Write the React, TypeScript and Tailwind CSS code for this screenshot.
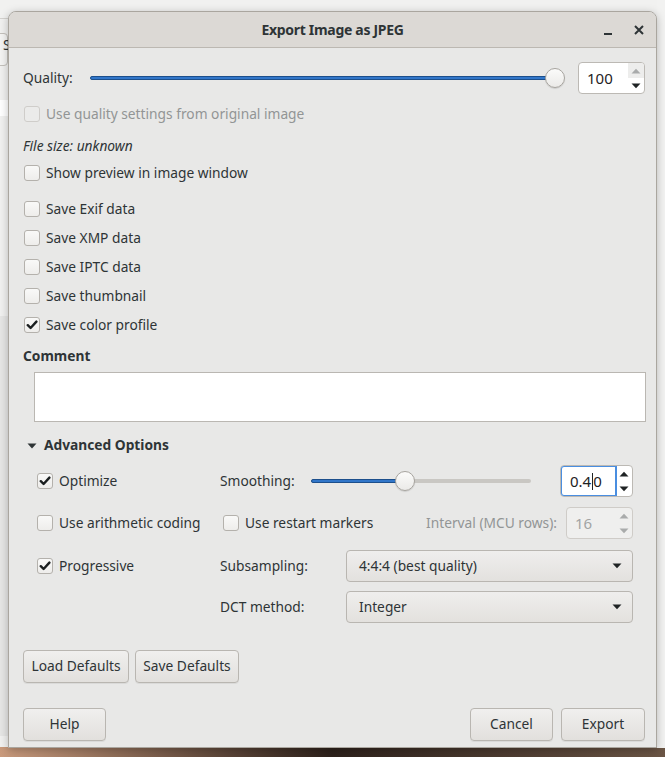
import React from "react";

const TEXT = "text-[#2e3436]";

const Check: React.FC<{ checked?: boolean; disabled?: boolean }> = ({ checked, disabled }) => (
  <span
    className={`flex h-[16px] w-[16px] shrink-0 items-center justify-center rounded-[3px] border ${
      disabled ? "border-[#cfcdca] bg-[#ebebea]" : "border-[#b4b1ac] bg-gradient-to-b from-[#f9f9f8] to-[#eeedeb]"
    }`}
  >
    {checked && (
      <svg width="12" height="12" viewBox="0 0 12 12">
        <path d="M1.8 6.2 L4.6 9 L10.4 2.6" fill="none" stroke="#1b1f20" strokeWidth="2.4" strokeLinecap="round" strokeLinejoin="round" />
      </svg>
    )}
  </span>
);

const CheckRow: React.FC<{ label: string; checked?: boolean; disabled?: boolean; h: string }> = ({ label, checked, disabled, h }) => (
  <div className={`flex items-center gap-[6px] pl-[1px] ${h}`}>
    <Check checked={checked} disabled={disabled} />
    <span className={`pt-[1px] ${disabled ? "text-[#929595]" : TEXT}`}>{label}</span>
  </div>
);

const Slider: React.FC<{ pct: number; className?: string }> = ({ pct, className }) => (
  <div className={`relative h-[20px] ${className ?? ""}`}>
    <div className="absolute left-0 right-[10px] top-[8px] h-[4px] rounded-full bg-[#c9c7c3]" />
    <div
      className="absolute left-0 top-[8px] h-[4px] rounded-full border border-[#1c4f8c] bg-[#3176c9]"
      style={{ width: `calc((100% - 20px) * ${pct} + 10px)` }}
    />
    <div
      className="absolute top-0 h-[20px] w-[20px] rounded-full border border-[#a7a49f] bg-gradient-to-b from-[#fbfbfa] to-[#ebeae8] shadow-[0_1px_1px_rgba(0,0,0,0.12)]"
      style={{ left: `calc((100% - 20px) * ${pct})` }}
    />
  </div>
);

const Arrow: React.FC<{ up?: boolean; color: string }> = ({ up, color }) => (
  <svg width="10" height="6" viewBox="0 0 10 6">
    <path d={up ? "M0.5 5.5 L5 0.8 L9.5 5.5 Z" : "M0.5 0.5 L5 5.2 L9.5 0.5 Z"} fill={color} />
  </svg>
);

const Spin: React.FC<{ value: string; w: string; focused?: boolean; disabled?: boolean; upDisabled?: boolean }> = ({
  value,
  w,
  focused,
  disabled,
  upDisabled,
}) => (
  <div
    className={`flex h-[32px] ${w} overflow-hidden rounded-[4px] border ${
      disabled ? "border-[#cfccc8] bg-[#efefee]" : "border-[#bcb9b4] bg-white"
    }`}
  >
    <div
      className={`flex flex-1 items-center pl-[8px] text-[15px] ${
        focused ? "-m-[1px] rounded-l-[4px] border-2 border-[#4a8ee0] pl-[8px]" : ""
      } ${disabled ? "text-[#a2a4a4]" : "text-[#1f2324]"}`}
    >
      {focused ? (
        <>
          0.4<span className="mx-[0.5px] inline-block h-[17px] w-[1px] bg-[#1f2324]" />0
        </>
      ) : (
        value
      )}
    </div>
    <div className="flex w-[16px] flex-col">
      <div className={`flex flex-1 items-center justify-center ${upDisabled ? "bg-[#ededec]" : ""}`}>
        <Arrow up color={disabled || upDisabled ? "#a9abab" : "#1f2324"} />
      </div>
      <div className="flex flex-1 items-center justify-center">
        <Arrow color={disabled ? "#a9abab" : "#1f2324"} />
      </div>
    </div>
  </div>
);

const Button: React.FC<{ label: string; w: string }> = ({ label, w }) => (
  <button
    className={`flex h-[33px] ${w} items-center justify-center rounded-[4px] border border-[#b9b6b1] bg-gradient-to-b from-[#f0efee] to-[#e2e0dd] ${TEXT} shadow-[0_1px_0_rgba(0,0,0,0.06)]`}
  >
    {label}
  </button>
);

const Combo: React.FC<{ label: string }> = ({ label }) => (
  <div
    className={`flex h-[32px] flex-1 items-center justify-between rounded-[4px] border border-[#b9b6b1] bg-gradient-to-b from-[#efeeed] to-[#e3e1de] pl-[12px] pr-[10px] ${TEXT}`}
  >
    <span>{label}</span>
    <Arrow color="#1f2324" />
  </div>
);

const App: React.FC = () => {
  return (
    <div className="relative h-[757px] w-[665px] overflow-hidden bg-[#f1f1f0] font-['Noto_Sans',sans-serif] text-[13.75px]">
      {/* stuff behind the dialog */}
      <div className="absolute left-0 top-[18px] h-[1px] w-[10px] bg-[#d3d1ce]" />
      <div className="absolute left-[-6px] top-[33px] h-[33px] w-[14px] rounded-[4px] border border-[#c3c0bb] bg-[#f4f4f3] text-[14px] text-[#2e3436]">
        <span className="ml-[8px]">S</span>
      </div>
      <div className="absolute left-0 top-[100px] h-[16px] w-[10px] bg-white" />
      <div className="absolute left-0 top-[316px] h-[420px] w-[10px] bg-[#e6e6e5]" />
      <div className="absolute bottom-0 left-0 h-[10px] w-full bg-gradient-to-r from-[#c99a7c] via-[#2d211b] to-[#6b5545]" />
      <div className="absolute right-0 top-0 h-[748px] w-[8px] bg-[#f2f2f1]" />

      <div className="relative ml-[8px] mt-[11px] flex h-[737px] w-[649px] flex-col overflow-hidden rounded-t-[8px] border border-[#aaa69f] bg-[#e8e8e7] shadow-[0_2px_8px_rgba(0,0,0,0.25)]">
        {/* title bar */}
        <div className="relative flex h-[36px] shrink-0 items-center justify-center border-b border-[#bcb8b2] bg-[#dcd9d5]">
          <span className="text-[14px] font-bold tracking-[-0.3px] text-[#2e3436]">Export Image as JPEG</span>
          <div className="absolute right-[12px] top-0 flex h-[36px] items-center gap-[22px]">
            <span className="mt-[8px] block h-[2px] w-[8px] bg-[#2e3436]" />
            <svg width="10" height="10" viewBox="0 0 10 10">
              <path d="M1 1 L9 9 M9 1 L1 9" stroke="#2e3436" strokeWidth="2" />
            </svg>
          </div>
        </div>

        <div className={`flex flex-1 flex-col pl-[14px] pr-[11px] pt-[14px] ${TEXT}`}>
          {/* quality */}
          <div className="flex h-[32px] items-center">
            <span className="w-[67px] shrink-0">Quality:</span>
            <Slider pct={1} className="flex-1" />
            <div className="ml-[13px]">
              <Spin value="100" w="w-[67px]" upDisabled />
            </div>
          </div>

          <CheckRow label="Use quality settings from original image" disabled h="h-[40px]" />
          <div className="flex h-[24px] items-center pt-[1px] italic">File size: unknown</div>
          <CheckRow label="Show preview in image window" h="h-[30px]" />
          <div className="h-[6px]" />
          <CheckRow label="Save Exif data" h="h-[29px]" />
          <CheckRow label="Save XMP data" h="h-[29px]" />
          <CheckRow label="Save IPTC data" h="h-[29px]" />
          <CheckRow label="Save thumbnail" h="h-[29px]" />
          <CheckRow label="Save color profile" checked h="h-[29px]" />

          <div className="mt-[5px] flex h-[24px] items-center pt-[1px] font-bold">Comment</div>
          <div className="ml-[11px] mr-[-1px] mt-[4px] h-[50px] border border-[#bab7b2] bg-white" />

          <div className="mt-[11px] flex h-[24px] items-center gap-[7px] pl-[4px] pt-[1px] font-bold">
            <svg width="10" height="6" viewBox="0 0 10 6">
              <path d="M0.5 0.5 L5 5.5 L9.5 0.5 Z" fill="#2e3436" />
            </svg>
            Advanced Options
          </div>

          {/* advanced */}
          <div className="flex flex-col pl-[13px] pr-[12px]">
            <div className="mt-[8px] flex h-[32px] items-center">
              <div className="w-[184px] shrink-0">
                <CheckRow label="Optimize" checked h="h-[32px]" />
              </div>
              <span className="w-[91px] shrink-0">Smoothing:</span>
              <Slider pct={0.4} className="flex-1" />
              <div className="ml-[19px]">
                <Spin value="0.40" w="w-[73px]" focused />
              </div>
            </div>

            <div className="mt-[10px] flex h-[32px] items-center">
              <div className="w-[184px] shrink-0">
                <CheckRow label="Use arithmetic coding" h="h-[32px]" />
              </div>
              <div className="ml-[2px]">
                <CheckRow label="Use restart markers" h="h-[32px]" />
              </div>
              <span className="ml-auto text-[#929595]">Interval (MCU rows):</span>
              <div className="ml-[9px]">
                <Spin value="16" w="w-[67px]" disabled />
              </div>
            </div>

            <div className="mt-[11px] flex h-[32px] items-center">
              <div className="w-[184px] shrink-0">
                <CheckRow label="Progressive" checked h="h-[32px]" />
              </div>
              <span className="w-[126px] shrink-0">Subsampling:</span>
              <Combo label="4:4:4 (best quality)" />
            </div>

            <div className="mt-[9px] flex h-[32px] items-center">
              <div className="w-[184px] shrink-0" />
              <span className="w-[126px] shrink-0">DCT method:</span>
              <Combo label="Integer" />
            </div>
          </div>

          <div className="mt-[27px] flex gap-[6px]">
            <Button label="Load Defaults" w="w-[106px]" />
            <Button label="Save Defaults" w="w-[104px]" />
          </div>

          <div className="mt-[25px] flex items-center">
            <Button label="Help" w="w-[83px]" />
            <div className="ml-auto flex gap-[8px]">
              <Button label="Cancel" w="w-[83px]" />
              <Button label="Export" w="w-[84px]" />
            </div>
          </div>
        </div>
      </div>
    </div>
  );
};

export default App;
